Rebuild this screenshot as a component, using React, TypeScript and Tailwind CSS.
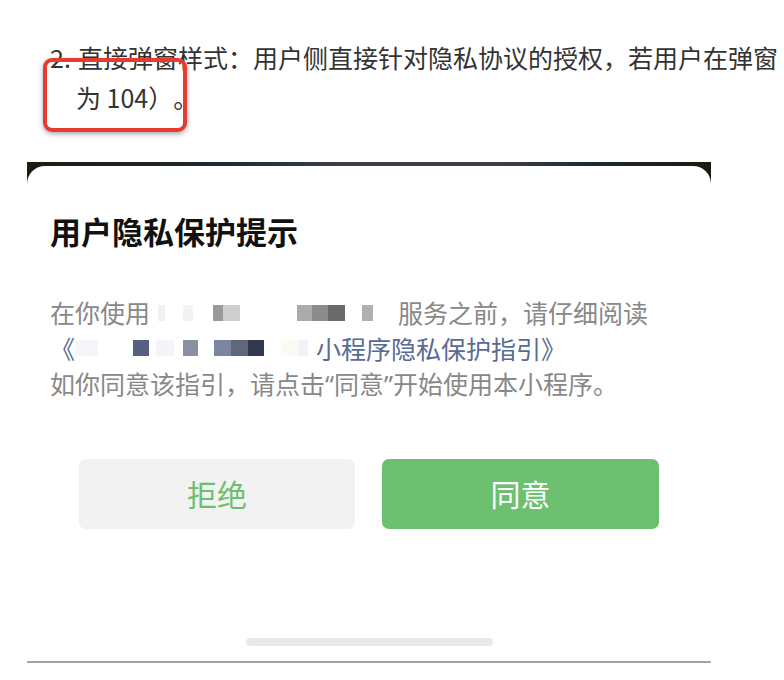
import React from "react";

const cjk = { fontFamily: '"Noto Sans CJK SC", "Noto Sans", sans-serif' };

// mosaic blocks that stand for the blurred app name
const nameRow1: [number, string][] = [
  [8, "transparent"],
  [7, "#f1f1f1"],
  [18, "transparent"],
  [10, "#f2f2f2"],
  [20, "transparent"],
  [10, "#9a9a9a"],
  [17, "#cfcfcf"],
  [57, "transparent"],
  [15, "#ababab"],
  [16, "#8c8c8c"],
  [17, "#6a6a6a"],
  [17, "transparent"],
  [11, "#b0b0b0"],
  [25, "transparent"],
];

const nameRow2: [number, string][] = [
  [23, "#f4f6f9"],
  [35, "transparent"],
  [16, "#566080"],
  [7, "transparent"],
  [18, "#f3f5f8"],
  [9, "transparent"],
  [15, "#8a8fa2"],
  [16, "transparent"],
  [17, "#7b87a1"],
  [17, "#5f6779"],
  [16, "#2f3950"],
  [17, "transparent"],
  [17, "#fbfbf2"],
  [10, "#f4f1fb"],
  [8, "transparent"],
];

function Mosaic({ blocks }: { blocks: [number, string][] }) {
  return (
    <span className="inline-flex h-[16px] items-stretch blur-[0.6px]">
      {blocks.map(([w, c], i) => (
        <span key={i} style={{ width: w, backgroundColor: c }} />
      ))}
    </span>
  );
}

export default function App() {
  return (
    <div
      className="relative h-[680px] w-[784px] overflow-hidden bg-white [text-spacing-trim:space-all]"
      style={cjk}
    >
      {/* article text above the screenshot */}
      <div className="pl-[50px] pt-[37px] text-[25px] leading-[40px] text-[#333]">
        <div className="flex whitespace-nowrap">
          <span className="w-[28px] shrink-0">2.</span>
          <span>直接弹窗样式：用户侧直接针对隐私协议的授权，若用户在弹窗</span>
        </div>
        <div className="pl-[26px] whitespace-nowrap">为 104）。</div>
      </div>

      {/* red annotation box */}
      <div className="absolute left-[43px] top-[58px] h-[74px] w-[144px] rounded-[9px] border-[4px] border-[#e63b2e] shadow-[0_2px_5px_rgba(0,0,0,0.35)]" />

      {/* phone screenshot */}
      <div className="ml-[27px] mt-[45px] w-[684px] bg-[linear-gradient(90deg,#1d1c10_0%,#1f2a33_30%,#3a4046_45%,#3a4046_70%,#1e2a30_82%,#1b1a0e_100%)] pt-[4px]">
        <div className="flex flex-col rounded-t-[18px] border-b-2 border-[#a3a3a3] bg-white px-[23px] pt-[45px] pb-[15px]">
          <div className="text-[31px] font-bold leading-[40px] text-[#111]">用户隐私保护提示</div>

          <div className="mt-[44px] text-[25px] leading-[35.5px] text-[#888]">
            <div className="flex items-center whitespace-nowrap">
              <span>在你使用</span>
              <Mosaic blocks={nameRow1} />
              <span>服务之前，请仔细阅读</span>
            </div>
            <div className="flex items-center whitespace-nowrap text-[#576b95]">
              <span>《</span>
              <Mosaic blocks={nameRow2} />
              <span>小程序隐私保护指引》</span>
            </div>
            <div className="whitespace-nowrap">
              如你同意该指引，请点击<span className="font-['Noto_Sans']">“</span>同意
              <span className="font-['Noto_Sans']">”</span>开始使用本小程序。
            </div>
          </div>

          <div className="mt-[56px] flex justify-center gap-[27px]">
            <button className="h-[70px] w-[276px] rounded-[7px] bg-[#f2f2f2] text-[30px] text-[#6cbf6f]">
              拒绝
            </button>
            <button className="h-[70px] w-[277px] rounded-[7px] bg-[#6cc070] text-[30px] text-white">
              同意
            </button>
          </div>

          <div className="mt-[109px] flex justify-center">
            <div className="h-[8px] w-[247px] rounded-full bg-[#e9e9ec]" />
          </div>
        </div>
      </div>
    </div>
  );
}
